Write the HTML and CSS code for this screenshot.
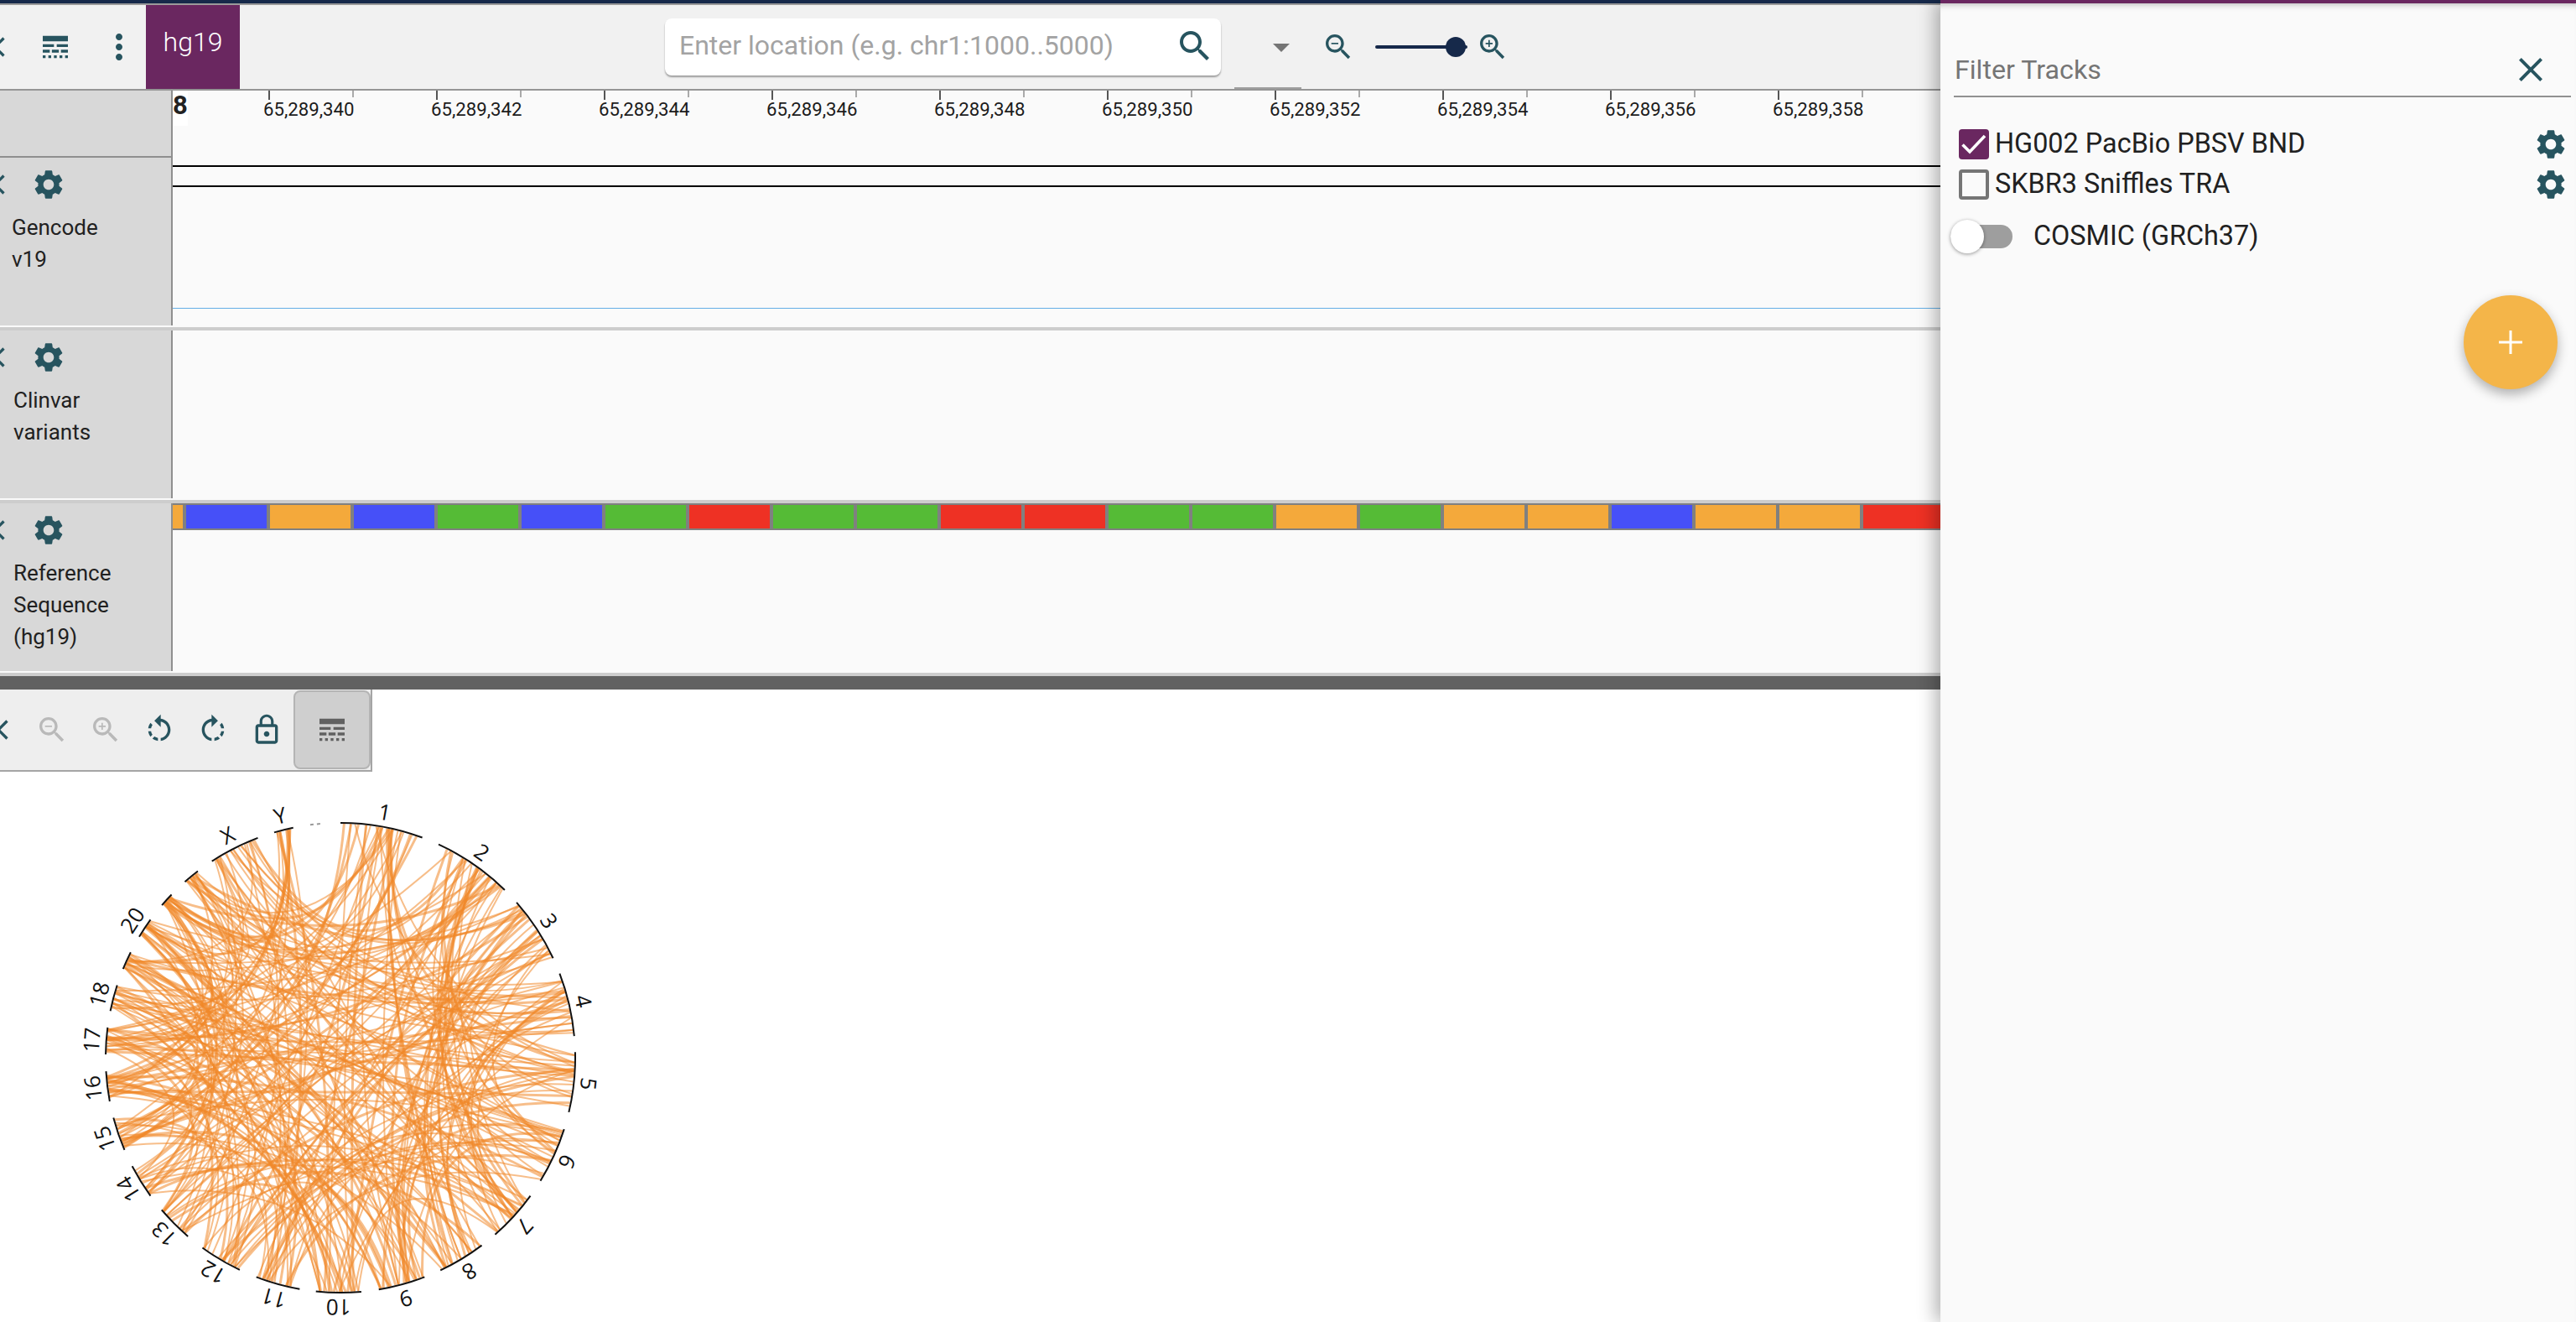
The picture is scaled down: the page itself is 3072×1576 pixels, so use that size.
FILE: index.html
```html
<!DOCTYPE html>
<html lang="en">
<head>
    <meta charset="UTF-8">
    <title>Genome Browser</title>
    <link rel="stylesheet" href="styles.css">
</head>
<body>

    <!-- shared icons -->
    <svg class="sprite" width="0" height="0">
        <symbol id="i-close" viewBox="0 0 24 24"><path d="M19 6.41L17.59 5 12 10.59 6.41 5 5 6.41 10.59 12 5 17.59 6.41 19 12 13.41 17.59 19 19 17.59 13.41 12z"/></symbol>
        <symbol id="i-lines" viewBox="0 0 24 24"><path d="M3 16h5v-2H3v2zm6.5 0h5v-2h-5v2zm6.5 0h5v-2h-5v2zM3 20h2v-2H3v2zm4 0h2v-2H7v2zm4 0h2v-2h-2v2zm4 0h2v-2h-2v2zm4 0h2v-2h-2v2zM3 12h8v-2H3v2zm10 0h8v-2h-8v2zM3 4v4h18V4H3z"/></symbol>
        <symbol id="i-more" viewBox="0 0 24 24"><path d="M12 8c1.1 0 2-.9 2-2s-.9-2-2-2-2 .9-2 2 .9 2 2 2zm0 2c-1.1 0-2 .9-2 2s.9 2 2 2 2-.9 2-2-.9-2-2-2zm0 6c-1.1 0-2 .9-2 2s.9 2 2 2 2-.9 2-2-.9-2-2-2z"/></symbol>
        <symbol id="i-search" viewBox="0 0 24 24"><path d="M15.5 14h-.79l-.28-.27C15.41 12.59 16 11.11 16 9.5 16 5.91 13.09 3 9.5 3S3 5.91 3 9.5 5.91 16 9.5 16c1.61 0 3.09-.59 4.23-1.57l.27.28v.79l5 4.99L20.49 19l-4.99-5zm-6 0C7.01 14 5 11.99 5 9.5S7.01 5 9.5 5 14 7.01 14 9.5 11.99 14 9.5 14z"/></symbol>
        <symbol id="i-zoom-in" viewBox="0 0 24 24"><path d="M15.5 14h-.79l-.28-.27C15.41 12.59 16 11.11 16 9.5 16 5.91 13.09 3 9.5 3S3 5.91 3 9.5 5.91 16 9.5 16c1.61 0 3.09-.59 4.23-1.57l.27.28v.79l5 4.99L20.49 19l-4.99-5zm-6 0C7.01 14 5 11.99 5 9.5S7.01 5 9.5 5 14 7.01 14 9.5 11.99 14 9.5 14z"/><path d="M12 10h-2v2H9v-2H7V9h2V7h1v2h2v1z"/></symbol>
        <symbol id="i-zoom-out" viewBox="0 0 24 24"><path d="M15.5 14h-.79l-.28-.27C15.41 12.59 16 11.11 16 9.5 16 5.91 13.09 3 9.5 3S3 5.91 3 9.5 5.91 16 9.5 16c1.61 0 3.09-.59 4.23-1.57l.27.28v.79l5 4.99L20.49 19l-4.99-5zm-6 0C7.01 14 5 11.99 5 9.5S7.01 5 9.5 5 14 7.01 14 9.5 11.99 14 9.5 14z"/><path d="M7 9h5v1H7z"/></symbol>
        <symbol id="i-gear" viewBox="0 0 24 24"><path d="M19.14,12.94c0.04-0.3,0.06-0.61,0.06-0.94c0-0.32-0.02-0.64-0.07-0.94l2.03-1.58c0.18-0.14,0.23-0.41,0.12-0.61l-1.92-3.32c-0.12-0.22-0.37-0.29-0.59-0.22l-2.39,0.96c-0.5-0.38-1.03-0.7-1.62-0.94L14.4,2.81c-0.04-0.24-0.24-0.41-0.48-0.41h-3.84c-0.24,0-0.43,0.17-0.47,0.41L9.25,5.35C8.66,5.59,8.12,5.92,7.63,6.29L5.24,5.33c-0.22-0.08-0.47,0-0.59,0.22L2.74,8.87C2.62,9.08,2.66,9.34,2.86,9.48l2.03,1.58C4.84,11.36,4.8,11.69,4.8,12s0.02,0.64,0.07,0.94l-2.03,1.58c-0.18,0.14-0.23,0.41-0.12,0.61l1.92,3.32c0.12,0.22,0.37,0.29,0.59,0.22l2.39-0.96c0.5,0.38,1.03,0.7,1.62,0.94l0.36,2.54c0.05,0.24,0.24,0.41,0.48,0.41h3.84c0.24,0,0.44-0.17,0.47-0.41l0.36-2.54c0.59-0.24,1.13-0.56,1.62-0.94l2.39,0.96c0.22,0.08,0.47,0,0.59-0.22l1.92-3.32c0.12-0.22,0.07-0.47-0.12-0.61L19.14,12.94z M12,15.6c-1.98,0-3.6-1.62-3.6-3.6s1.62-3.6,3.6-3.6s3.6,1.62,3.6,3.6S13.98,15.6,12,15.6z"/></symbol>
        <symbol id="i-rotate-left" viewBox="0 0 24 24"><path d="M7.11 8.53L5.7 7.11C4.8 8.27 4.24 9.61 4.07 11h2.02c.14-.87.49-1.72 1.02-2.47zM6.09 13H4.07c.17 1.39.72 2.73 1.62 3.89l1.41-1.42c-.52-.75-.87-1.59-1.01-2.47zm1.01 5.32c1.16.9 2.51 1.44 3.9 1.61V17.9c-.87-.15-1.71-.49-2.46-1.03L7.1 18.32zM13 4.07V1L8.45 5.55 13 10V6.09c2.84.48 5 2.94 5 5.91s-2.16 5.43-5 5.91v2.02c3.95-.49 7-3.85 7-7.93s-3.05-7.44-7-7.93z"/></symbol>
        <symbol id="i-rotate-right" viewBox="0 0 24 24"><path d="M15.55 5.55L11 1v3.07C7.06 4.56 4 7.92 4 12s3.05 7.44 7 7.93v-2.02c-2.84-.48-5-2.94-5-5.91s2.16-5.43 5-5.91V10l4.55-4.45zM19.93 11c-.17-1.39-.72-2.73-1.62-3.89l-1.42 1.42c.54.75.88 1.6 1.02 2.47h2.02zM13 17.9v2.02c1.39-.17 2.74-.71 3.9-1.61l-1.44-1.44c-.75.54-1.59.89-2.46 1.03zm3.89-2.42l1.42 1.41c.9-1.16 1.45-2.5 1.62-3.89h-2.02c-.14.87-.48 1.72-1.02 2.48z"/></symbol>
        <symbol id="i-lock" viewBox="0 0 24 24"><path d="M12 17c1.1 0 2-.9 2-2s-.9-2-2-2-2 .9-2 2 .9 2 2 2zm6-9h-1V6c0-2.76-2.24-5-5-5S7 3.24 7 6v2H6c-1.1 0-2 .9-2 2v10c0 1.1.9 2 2 2h12c1.1 0 2-.9 2-2V10c0-1.1-.9-2-2-2zM8.9 6c0-1.71 1.39-3.1 3.1-3.1s3.1 1.39 3.1 3.1v2H8.9V6zM18 20H6V10h12v10z"/></symbol>
    </svg>

    <div class="app">
        <div class="main">
            <div class="toolbar">
                <svg class="icon close-clipped"><use href="#i-close"/></svg>
                <svg class="icon lines-btn"><use href="#i-lines"/></svg>
                <svg class="icon icon-lg more-btn"><use href="#i-more"/></svg>
                <div class="assembly">hg19</div>
                <div class="search">
                    <span class="search-text">Enter location (e.g. chr1:1000..5000)</span>
                    <svg class="icon icon-lg search-icon"><use href="#i-search"/></svg>
                </div>
                <div class="caret"></div>
                <svg class="icon zoom-out"><use href="#i-zoom-out"/></svg>
                <div class="slider"><div class="slider-thumb"></div></div>
                <svg class="icon zoom-in"><use href="#i-zoom-in"/></svg>
                <div class="tab-mark"></div>
            </div>

            <div class="ruler-row">
                <div class="ruler-side"></div>
                <div class="ruler">
                    <div class="chrom">8</div>
                    <div class="tick">65,289,340</div>
                    <div class="tick">65,289,342</div>
                    <div class="tick">65,289,344</div>
                    <div class="tick">65,289,346</div>
                    <div class="tick">65,289,348</div>
                    <div class="tick">65,289,350</div>
                    <div class="tick">65,289,352</div>
                    <div class="tick">65,289,354</div>
                    <div class="tick">65,289,356</div>
                    <div class="tick">65,289,358</div>
                </div>
            </div>

            <div class="track">
                <div class="track-label">
                    <div class="track-btns">
                        <svg class="icon close-clipped"><use href="#i-close"/></svg>
                        <svg class="icon gear"><use href="#i-gear"/></svg>
                    </div>
                    <div class="track-name name-gencode">Gencode<br>v19</div>
                </div>
                <div class="track-body">
                    <div class="gene-band"></div>
                    <div class="blue-line"></div>
                </div>
            </div>

            <div class="track">
                <div class="track-label">
                    <div class="track-btns">
                        <svg class="icon close-clipped"><use href="#i-close"/></svg>
                        <svg class="icon gear"><use href="#i-gear"/></svg>
                    </div>
                    <div class="track-name">Clinvar<br>variants</div>
                </div>
                <div class="track-body"></div>
            </div>

            <div class="track">
                <div class="track-label">
                    <div class="track-btns">
                        <svg class="icon close-clipped"><use href="#i-close"/></svg>
                        <svg class="icon gear"><use href="#i-gear"/></svg>
                    </div>
                    <div class="track-name">Reference<br>Sequence<br>(hg19)</div>
                </div>
                <div class="track-body">
                    <div class="bases">
                        <span class="base stub orange"></span>
                        <span class="base blue"></span>
                        <span class="base orange"></span>
                        <span class="base blue"></span>
                        <span class="base green"></span>
                        <span class="base blue"></span>
                        <span class="base green"></span>
                        <span class="base red"></span>
                        <span class="base green"></span>
                        <span class="base green"></span>
                        <span class="base red"></span>
                        <span class="base red"></span>
                        <span class="base green"></span>
                        <span class="base green"></span>
                        <span class="base orange"></span>
                        <span class="base green"></span>
                        <span class="base orange"></span>
                        <span class="base orange"></span>
                        <span class="base blue"></span>
                        <span class="base orange"></span>
                        <span class="base orange"></span>
                        <span class="base red"></span>
                        <span class="base green"></span>
                    </div>
                </div>
            </div>

            <div class="divider"></div>

            <div class="circular-bar">
                <svg class="icon close-clipped"><use href="#i-close"/></svg>
                <svg class="icon muted"><use href="#i-zoom-out"/></svg>
                <svg class="icon muted"><use href="#i-zoom-in"/></svg>
                <svg class="icon"><use href="#i-rotate-left"/></svg>
                <svg class="icon"><use href="#i-rotate-right"/></svg>
                <svg class="icon"><use href="#i-lock"/></svg>
                <div class="tracks-toggle"><svg class="icon"><use href="#i-lines"/></svg></div>
            </div>

            <svg id="chords" class="chords" viewBox="0 920 800 656"></svg>
        </div>

        <div class="panel">
            <div class="filter">
                <span class="filter-text">Filter Tracks</span>
                <svg class="icon icon-lg"><use href="#i-close"/></svg>
            </div>
            <div class="track-option">
                <span class="checkbox checked">
                    <svg viewBox="0 0 36 36"><path d="M4.5 18.5L13 27 31 8" fill="none" stroke="#fff" stroke-width="3.6"/></svg>
                </span>
                <span class="option-name">HG002 PacBio PBSV BND</span>
                <svg class="icon gear"><use href="#i-gear"/></svg>
            </div>
            <div class="track-option">
                <span class="checkbox"></span>
                <span class="option-name">SKBR3 Sniffles TRA</span>
                <svg class="icon gear"><use href="#i-gear"/></svg>
            </div>
            <div class="toggle-row">
                <span class="switch"><span class="switch-thumb"></span></span>
                <span class="option-name">COSMIC (GRCh37)</span>
            </div>
            <div class="fab-row">
                <div class="fab">
                    <svg viewBox="0 0 28 28" width="28" height="28"><path d="M14 0v28M0 14h28" stroke="#fff" stroke-width="3"/></svg>
                </div>
            </div>
        </div>
    </div>

    <script src="chords.js"></script>
</body>
</html>
```

FILE: styles.css
```css
html, body {
    margin: 0;
    height: 100%;
    overflow: hidden;
}
body {
    font-family: Roboto, "Liberation Sans", sans-serif;
    background-color: #fff;
    color: #212121;
}
.sprite {
    display: block;
    height: 0;
}
.app {
    display: flex;
    height: 1576px;
}
.main {
    flex: none;
    width: 2314px;
    overflow: hidden;
}
.icon {
    flex: none;
    display: block;
    width: 40px;
    height: 40px;
    fill: #27545f;
}
.icon-lg {
    width: 48px;
    height: 48px;
}
.gear {
    width: 42px;
    height: 42px;
}
.muted {
    fill: #b9b9b9;
}

/* top toolbar */
.toolbar {
    position: relative;
    display: flex;
    align-items: center;
    box-sizing: border-box;
    height: 108px;
    background-color: #f1f1f1;
    border-top: 4px solid #16294a;
    border-bottom: 2px solid #959595;
    box-shadow: inset 0 2px 0 #9a9a9a;
    padding-top: 2px;
}
.close-clipped {
    margin-left: -26px;
}
.lines-btn {
    margin-left: 32px;
}
.more-btn {
    margin-left: 32px;
}
.assembly {
    align-self: stretch;
    width: 112px;
    margin-left: 8px;
    background-color: #6a2760;
    color: #fff;
    font-size: 32px;
    font-weight: 300;
    line-height: 88px;
    text-align: center;
}
.search {
    display: flex;
    align-items: center;
    justify-content: space-between;
    box-sizing: border-box;
    width: 663px;
    height: 68px;
    margin-left: 507px;
    padding: 0 7px 0 17px;
    background-color: #fff;
    border-radius: 8px;
    box-shadow: 0 2px 2px rgba(0, 0, 0, 0.35);
}
.search-text {
    margin-bottom: 4px;
    color: #a3a3a3;
    font-size: 32px;
}
.search-icon {
    margin-bottom: 2px;
}
.caret {
    width: 0;
    height: 0;
    margin-left: 62px;
    margin-top: 2px;
    border-left: 10px solid transparent;
    border-right: 10px solid transparent;
    border-top: 10px solid #757575;
}
.zoom-out {
    margin-left: 38px;
}
.slider {
    position: relative;
    width: 110px;
    height: 4px;
    margin-left: 24px;
    background-color: #16294a;
    border-radius: 2px;
}
.slider-thumb {
    position: absolute;
    right: 2px;
    top: -10px;
    width: 24px;
    height: 24px;
    background-color: #16294a;
    border-radius: 50%;
}
.zoom-in {
    margin-left: 10px;
}
.tab-mark {
    position: absolute;
    left: 1472px;
    bottom: 0;
    width: 80px;
    height: 2px;
    background-color: #9e9e9e;
}

/* ruler */
.ruler-row {
    display: flex;
    height: 80px;
}
.ruler-side {
    flex: none;
    box-sizing: border-box;
    width: 206px;
    background-color: #d8d8d8;
    border-right: 2px solid #8f8f8f;
    border-bottom: 2px solid #8f8f8f;
}
.ruler {
    flex: 1;
    display: flex;
    background-color: #fafafa;
}
.chrom {
    flex: none;
    box-sizing: border-box;
    width: 18px;
    height: 42px;
    margin-right: 96px;
    padding-top: 1px;
    background-color: #fff;
    color: #222;
    font-size: 31px;
    font-weight: 700;
    line-height: 34px;
    text-align: center;
}
.tick {
    position: relative;
    flex: none;
    width: 200px;
    padding-top: 9px;
    font-size: 22.2px;
    line-height: 26px;
    color: #1c1c1c;
    text-indent: -6px;
    white-space: nowrap;
}
.tick::before,
.tick::after {
    content: "";
    position: absolute;
    top: 0;
    left: 0;
    width: 2px;
    height: 11px;
    background-color: #555;
}
.tick::after {
    left: 100px;
    height: 8px;
    background-color: #aaa;
}

/* tracks */
.track {
    display: flex;
    box-sizing: border-box;
    height: 206px;
    background-color: #fafafa;
    border-bottom: 4px solid #cdcdcd;
}
.track-label {
    flex: none;
    box-sizing: border-box;
    width: 206px;
    height: 200px;
    padding-top: 11px;
    background-color: #d8d8d8;
    border-right: 2px solid #8f8f8f;
}
.track-btns {
    display: flex;
    align-items: center;
    gap: 23px;
}
.track-name {
    margin-top: 11px;
    padding-left: 16px;
    font-size: 26px;
    line-height: 38px;
}
.name-gencode {
    padding-left: 14px;
}
.track-body {
    flex: 1;
    height: 200px;
    overflow: hidden;
}
.gene-band {
    height: 22px;
    margin-top: 9px;
    border-top: 2px solid #000;
    border-bottom: 2px solid #000;
}
.blue-line {
    height: 1px;
    margin-top: 144px;
    background-color: #64afe6;
}
.bases {
    display: flex;
    gap: 4px;
    padding: 2px 0;
    background-color: #808080;
}
.base {
    flex: none;
    width: 96px;
    height: 28px;
}
.stub {
    width: 12px;
}
.blue {
    background-color: #4650f8;
}
.orange {
    background-color: #f4a93b;
}
.green {
    background-color: #55bb36;
}
.red {
    background-color: #ee3124;
}
.divider {
    height: 16px;
    background-color: #616161;
}

/* circular view */
.circular-bar {
    display: flex;
    align-items: center;
    gap: 24px;
    width: 442px;
    height: 96px;
    background-color: #eee;
    border-right: 2px solid #a5a5a5;
    border-bottom: 2px solid #a5a5a5;
}
.circular-bar .close-clipped {
    margin-left: -22px;
}
.tracks-toggle {
    display: flex;
    align-items: center;
    justify-content: center;
    box-sizing: border-box;
    width: 92px;
    height: 94px;
    margin-left: -12px;
    background-color: #cfcfcf;
    border: 2px solid #b4b4b4;
    border-radius: 8px;
}
.tracks-toggle .icon {
    fill: #616161;
}
.chords {
    display: block;
    width: 800px;
    height: 656px;
}
.chord {
    fill: none;
    stroke: #f0882a;
    stroke-opacity: 0.55;
}
.arc {
    fill: none;
    stroke: #111;
    stroke-width: 2;
}
.arc-mt {
    stroke: #999;
    stroke-dasharray: 4 4;
}
.chrom-label {
    font-family: "Open Sans", sans-serif;
    font-size: 26px;
    font-weight: 500;
    fill: #111;
    text-anchor: middle;
    dominant-baseline: central;
}

/* filter panel */
.panel {
    position: relative;
    flex: 1;
    box-sizing: border-box;
    padding: 4px 6px 0 16px;
    background-color: #fafafa;
    box-shadow: -6px 0 20px rgba(0, 0, 0, 0.3), inset 0 12px 10px -8px rgba(0, 0, 0, 0.35);
}
.panel::before {
    content: "";
    position: absolute;
    top: 0;
    left: 0;
    right: 0;
    height: 4px;
    background-color: #6a2760;
}
.filter {
    display: flex;
    align-items: center;
    justify-content: space-between;
    box-sizing: border-box;
    height: 112px;
    padding: 48px 24px 0 1px;
    border-bottom: 2px solid #919191;
}
.filter-text {
    color: #757575;
    font-size: 32.2px;
}
.track-option {
    display: flex;
    align-items: center;
    height: 48px;
    padding-left: 6px;
}
.filter + .track-option {
    margin-top: 32px;
}
.option-name {
    font-size: 32.4px;
    color: #212121;
}
.track-option .option-name {
    flex: 1;
    margin-left: 7px;
    margin-bottom: 2px;
}
.track-option .gear {
    margin-right: 3px;
}
.checkbox {
    flex: none;
    box-sizing: border-box;
    display: block;
    width: 36px;
    height: 36px;
    border: 4px solid #757575;
    border-radius: 4px;
}
.checkbox.checked {
    background-color: #6a2760;
    border: 0;
}
.checkbox svg {
    display: block;
}
.toggle-row {
    display: flex;
    align-items: center;
    height: 40px;
    margin-top: 18px;
    margin-left: -4px;
}
.switch {
    position: relative;
    flex: none;
    display: block;
    width: 74px;
    height: 28px;
    background-color: #9e9e9e;
    border-radius: 14px;
}
.switch-thumb {
    position: absolute;
    left: 0;
    top: -6px;
    width: 40px;
    height: 40px;
    background-color: #fff;
    border-radius: 50%;
    box-shadow: 0 1px 4px rgba(0, 0, 0, 0.4);
}
.toggle-row .option-name {
    margin-left: 25px;
    margin-bottom: 2px;
}
.fab-row {
    display: flex;
    justify-content: flex-end;
    margin-top: 50px;
    padding-right: 16px;
}
.fab {
    display: flex;
    align-items: center;
    justify-content: center;
    width: 112px;
    height: 112px;
    background-color: #f4b549;
    border-radius: 50%;
    box-shadow: 0 6px 14px rgba(0, 0, 0, 0.3);
}
```

FILE: chords.js
```js
// chromosome arcs, start and end angle in degrees from the top, clockwise
var arcs = [
    ['1', 0, 20.4], ['2', 24.7, 44.4], ['3', 48.6, 64.9], ['4', 69, 84.7],
    ['5', 88.6, 103.4], ['6', 107.7, 121.6], ['7', 126, 138.8], ['8', 143, 154.8],
    ['9', 159, 170.6], ['10', 174.9, 186], ['11', 190, 201], ['12', 205.4, 216],
    ['13', 220.5, 229.6], ['14', 234, 242.5], ['15', 246.9, 255.2], ['16', 259.3, 266.7],
    ['17', 270.8, 277.4], ['18', 281.5, 288], ['', 292.2, 296.7], ['20', 301, 306],
    ['', 310.5, 314], ['', 318.5, 322.6], ['X', 326.8, 339.4], ['Y', 343.6, 348.4]
];
var cx = 406, cy = 1261, r = 280;
var svg = document.getElementById('chords');
var NS = 'http://www.w3.org/2000/svg';

var seed = 8191;
function rnd() {
    seed = (seed * 16807) % 2147483647;
    return seed / 2147483647;
}

function pt(deg, radius) {
    var a = deg * Math.PI / 180;
    return [cx + radius * Math.sin(a), cy - radius * Math.cos(a)];
}

function add(tag, cls, attrs) {
    var el = document.createElementNS(NS, tag);
    el.setAttribute('class', cls);
    for (var k in attrs) el.setAttribute(k, attrs[k]);
    svg.appendChild(el);
    return el;
}

function pickAngle(arc) {
    return arc[1] + 0.3 + rnd() * (arc[2] - arc[1] - 0.6);
}

// each arc sends out chords in proportion to its length,
// always to an arc at least three places away
arcs.forEach(function (arc, i) {
    var count = Math.round((arc[2] - arc[1]) * 0.95) + 2;
    for (var n = 0; n < count; n++) {
        var j = (i + 3 + Math.floor(rnd() * (arcs.length - 5))) % arcs.length;
        var p0 = pt(pickAngle(arc), r - 1);
        var p1 = pt(pickAngle(arcs[j]), r - 1);
        // pull the control point from the centre towards the chord's middle
        var pull = 0.15 + rnd() * 0.4;
        var qx = cx + ((p0[0] + p1[0]) / 2 - cx) * pull + (rnd() - 0.5) * 50;
        var qy = cy + ((p0[1] + p1[1]) / 2 - cy) * pull + (rnd() - 0.5) * 50;
        add('path', 'chord', {
            d: 'M' + p0[0].toFixed(1) + ' ' + p0[1].toFixed(1) +
               'Q' + qx.toFixed(1) + ' ' + qy.toFixed(1) + ' ' +
               p1[0].toFixed(1) + ' ' + p1[1].toFixed(1),
            'stroke-width': rnd() < 0.25 ? 3 : 2
        });
    }
});

function arcPath(a0, a1) {
    var s = pt(a0, r), e = pt(a1, r);
    return 'M' + s[0] + ' ' + s[1] + 'A' + r + ' ' + r + ' 0 0 1 ' + e[0] + ' ' + e[1];
}

arcs.forEach(function (arc) {
    add('path', 'arc', { d: arcPath(arc[1], arc[2]) });
    if (!arc[0]) return;
    var mid = (arc[1] + arc[2]) / 2;
    var p = pt(mid, 298);
    var label = add('text', 'chrom-label', {
        x: p[0], y: p[1],
        transform: 'rotate(' + mid + ' ' + p[0] + ' ' + p[1] + ')'
    });
    label.textContent = arc[0];
});

add('path', 'arc arc-mt', { d: arcPath(352.6, 355.8) });
```
